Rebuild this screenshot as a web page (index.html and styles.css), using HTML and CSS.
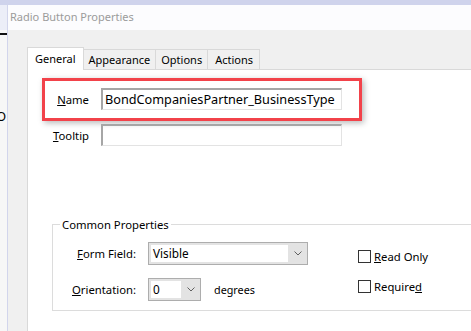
FILE: index.html
```html
<!DOCTYPE html>
<html lang="en">
<head>
  <meta charset="UTF-8">
  <title>Radio Button Properties</title>
  <link rel="stylesheet" href="styles.css">
</head>
<body>
  <div class="frame-top"></div>
  <div class="screen">
    <div class="behind">
      <div class="behind-title"></div>
      <div class="behind-bar"></div>
      <div class="behind-text">O</div>
    </div>

    <div class="window">
      <div class="titlebar">Radio Button Properties</div>
      <div class="body">
        <div class="tabs">
          <div class="tab active">General</div>
          <div class="tab">Appearance</div>
          <div class="tab">Options</div>
          <div class="tab last">Actions</div>
        </div>

        <div class="panel">
          <div class="highlight">
            <div class="field-row">
              <label class="field-label"><u>N</u>ame</label>
              <div class="textbox">BondCompaniesPartner_BusinessType</div>
            </div>
          </div>

          <div class="field-row tooltip-row">
            <label class="field-label"><u>T</u>ooltip</label>
            <div class="textbox"></div>
          </div>

          <fieldset class="group">
            <legend>Common Properties</legend>
            <div class="group-inner">
              <div class="group-left">
                <div class="prop-row">
                  <label class="prop-label"><u>F</u>orm Field:</label>
                  <div class="combo combo-wide">
                    <div class="combo-value">Visible</div>
                    <div class="combo-arrow">
                      <svg width="8" height="5" viewBox="0 0 8 5"><path d="M0.5 0.5 L4 4 L7.5 0.5" fill="none" stroke="#606060" stroke-width="1"/></svg>
                    </div>
                  </div>
                </div>
                <div class="prop-row">
                  <label class="prop-label"><u>O</u>rientation:</label>
                  <div class="combo combo-small">
                    <div class="combo-value">0</div>
                    <div class="combo-arrow">
                      <svg width="8" height="5" viewBox="0 0 8 5"><path d="M0.5 0.5 L4 4 L7.5 0.5" fill="none" stroke="#606060" stroke-width="1"/></svg>
                    </div>
                  </div>
                  <span class="unit">degrees</span>
                </div>
              </div>

              <div class="group-right">
                <div class="check-row"><span class="checkbox"></span><u>R</u>ead Only</div>
                <div class="check-row"><span class="checkbox"></span>Require<u>d</u></div>
              </div>
            </div>
          </fieldset>
        </div>
      </div>
    </div>
  </div>
</body>
</html>
```

FILE: styles.css
```css
html, body {
  margin: 0;
  height: 100%;
  overflow: hidden;
}

body {
  background: #fff;
  font-family: 'Noto Sans', sans-serif;
  font-size: 11.3px;
  color: #000;
  display: flex;
  flex-direction: column;
}

.frame-top {
  height: 5px;
  background: #cfd3ec;
  flex: none;
}

.screen {
  flex: 1;
  display: flex;
}

/* window behind the dialog */
.behind {
  width: 7px;
  flex: none;
  background: #f7f7f7;
  overflow: hidden;
}

.behind-title {
  height: 25px;
  background: #eceef8;
}

.behind-bar {
  height: 2px;
  margin-top: 3px;
  background: #111;
}

.behind-text {
  margin-top: 72px;
  margin-left: -4px;
  font-size: 13px;
}

.window {
  flex: 1;
  display: flex;
  flex-direction: column;
  border-left: 1px solid #d2d5ec;
  min-width: 0;
}

.titlebar {
  height: 25px;
  line-height: 24px;
  padding-left: 2px;
  background: #fcfcfe;
  color: #9b9b9b;
  font-size: 11px;
}

.body {
  flex: 1;
  background: #f0f0f0;
  padding: 17px 0 0 19px;
  display: flex;
  flex-direction: column;
}

.tabs {
  display: flex;
  align-items: flex-end;
  margin-bottom: -1px;
  font-size: 11px;
}

.tab {
  height: 20px;
  line-height: 20px;
  padding: 0 5px;
  margin-bottom: 1px;
  border: 1px solid #d9d9d9;
  border-bottom: none;
  border-left: none;
  box-sizing: border-box;
  background: #f0f0f0;
}

.tab.last {
  padding: 0 6px 0 7px;
}

.tab.active {
  height: 23px;
  line-height: 21px;
  padding: 0 7px;
  margin-bottom: 0;
  border-left: 1px solid #d9d9d9;
  background: #fff;
  position: relative;
}

.panel {
  flex: 1;
  background: #fff;
  border-top: 1px solid #d9d9d9;
  border-left: 1px solid #d9d9d9;
  overflow: hidden;
}

.highlight {
  width: 310px;
  margin: 8px 0 0 14px;
  padding: 7px 0 8px 4px;
  border: 3px solid #f2424a;
  box-shadow: 2px 2px 6px rgba(0, 0, 0, 0.28);
}

.field-row {
  display: flex;
  align-items: center;
  gap: 12px;
}

.field-label {
  width: 40px;
  text-align: right;
}

.tooltip-row {
  margin: 3px 0 0 21px;
}

.textbox {
  width: 236px;
  height: 19px;
  line-height: 19px;
  padding-left: 2px;
  border: 1px solid #e3e3e3;
  border-top: 2px solid #a6a6a6;
  border-left: 2px solid #a6a6a6;
  font-size: 12.7px;
  white-space: nowrap;
  overflow: hidden;
}

.group {
  margin: 71px 0 0 24px;
  width: 480px;
  padding: 0 0 9px 7px;
  border: 1px solid #dcdcdc;
}

.group legend {
  padding: 0 2px;
}

.group-inner {
  display: flex;
  padding-top: 10px;
}

.group-left {
  display: flex;
  flex-direction: column;
  gap: 13px;
}

.prop-row {
  display: flex;
  align-items: center;
  gap: 12px;
}

.prop-label {
  width: 76px;
  text-align: right;
}

.combo {
  display: flex;
  height: 23px;
  box-sizing: border-box;
  padding: 2px 0 2px 2px;
  border: 1px solid #adadad;
  background: #e3e3e3;
}

.combo-wide {
  width: 160px;
}

.combo-small {
  width: 53px;
}

.combo-value {
  flex: 1;
  background: #fff;
  padding-left: 2px;
  line-height: 17px;
  font-size: 11.8px;
}

.combo-arrow {
  width: 19px;
  display: flex;
  align-items: center;
  justify-content: center;
}

.unit {
  margin-left: 1px;
  font-size: 10.8px;
}

.group-right {
  margin-left: 50px;
  padding-top: 7px;
  display: flex;
  flex-direction: column;
  gap: 15px;
}

.check-row {
  display: flex;
  align-items: center;
  height: 15px;
}

.checkbox {
  width: 11px;
  height: 11px;
  border: 1px solid #333;
  background: #fff;
  margin-right: 3px;
}
```
